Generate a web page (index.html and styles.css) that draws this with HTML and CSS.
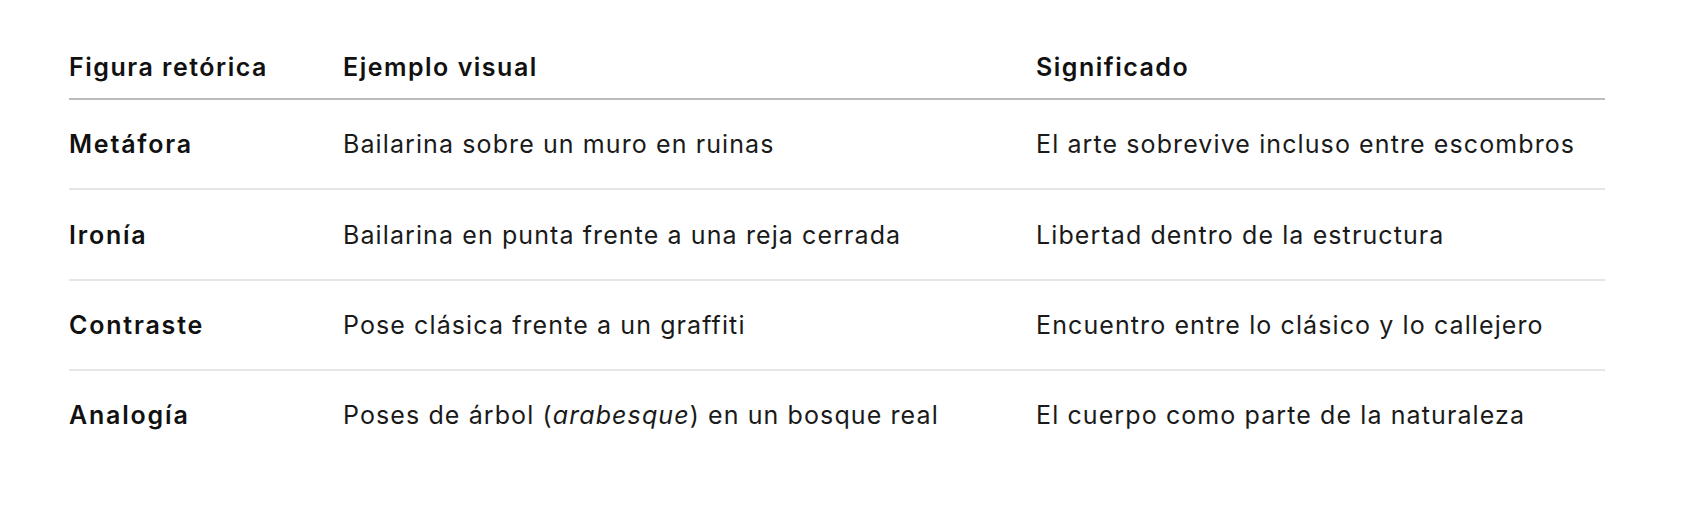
FILE: index.html
```html
<!DOCTYPE html>
<html lang="es">
<head>
<meta charset="utf-8">
<title>Figuras retóricas</title>
<link rel="stylesheet" href="styles.css">
</head>
<body>
<main class="page">
  <table class="rhet">
    <colgroup>
      <col class="c1">
      <col class="c2">
      <col class="c3">
    </colgroup>
    <thead>
      <tr>
        <th>Figura retórica</th>
        <th>Ejemplo visual</th>
        <th>Significado</th>
      </tr>
    </thead>
    <tbody>
      <tr>
        <td class="fig">Metáfora</td>
        <td>Bailarina sobre un muro en ruinas</td>
        <td>El arte sobrevive incluso entre escombros</td>
      </tr>
      <tr>
        <td class="fig">Ironía</td>
        <td>Bailarina en punta frente a una reja cerrada</td>
        <td>Libertad dentro de la estructura</td>
      </tr>
      <tr>
        <td class="fig">Contraste</td>
        <td>Pose clásica frente a un graffiti</td>
        <td>Encuentro entre lo clásico y lo callejero</td>
      </tr>
      <tr class="last">
        <td class="fig">Analogía</td>
        <td>Poses de árbol (<em>arabesque</em>) en un bosque real</td>
        <td>El cuerpo como parte de la naturaleza</td>
      </tr>
    </tbody>
  </table>
</main>
</body>
</html>
```
FILE: styles.css
```css
html, body {
  margin: 0;
  padding: 0;
  background: #ffffff;
}

body {
  font-family: Inter, "Noto Sans", "Liberation Sans", sans-serif;
  color: #1a1a1a;
  font-size: 25px;
  line-height: 36px;
  letter-spacing: 1.1px;
}

.page {
  padding: 36px 0 0 69px;
}

.rhet {
  width: 1536px;
  border-collapse: collapse;
  table-layout: fixed;
}

.c1 { width: 274px; }
.c2 { width: 693px; }
.c3 { width: 569px; }

.rhet th {
  text-align: left;
  font-weight: 600;
  color: #111111;
  letter-spacing: 1.5px;
  padding: 13px 0;
  border-bottom: 2px solid #bcbcbc;
}

.rhet td {
  text-align: left;
  font-weight: 400;
  padding: 26.4px 0 25.9px 0;
  border-bottom: 2px solid #e6e6e6;
  white-space: nowrap;
}

.rhet tr.last td {
  border-bottom: none;
}

.rhet td.fig {
  font-weight: 600;
  color: #111111;
  letter-spacing: 1.8px;
}

.rhet em {
  font-style: italic;
}
```
